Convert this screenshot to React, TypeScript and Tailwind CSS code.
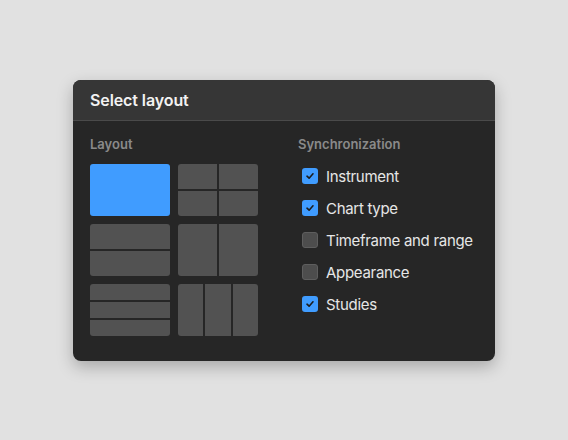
import React from "react";

function Check({ checked }: { checked: boolean }) {
  return checked ? (
    <div className="w-4 h-4 shrink-0 rounded-[3px] bg-[#409cff] flex items-center justify-center">
      <svg width="10" height="10" viewBox="0 0 10 10" fill="none">
        <path d="M2 5.2 L4.1 7.2 L8 2.8" stroke="#1c1c1c" strokeWidth="1.6" strokeLinecap="round" strokeLinejoin="round" />
      </svg>
    </div>
  ) : (
    <div className="w-4 h-4 shrink-0 rounded-[3px] bg-[#4d4d4d] border border-[#5e5e5e]" />
  );
}

const cell = "bg-[#525252]";

export default function App() {
  const items: [string, boolean][] = [
    ["Instrument", true],
    ["Chart type", true],
    ["Timeframe and range", false],
    ["Appearance", false],
    ["Studies", true],
  ];
  return (
    <div
      className="w-[568px] h-[440px] bg-[#e1e1e1] flex items-center justify-center"
      style={{ fontFamily: "Inter, 'Noto Sans', sans-serif" }}
    >
      <div className="w-[422px] h-[281px] rounded-[8px] bg-[#262626] overflow-hidden shadow-[0_6px_16px_rgba(0,0,0,0.25)] flex flex-col">
        <div className="h-[41px] shrink-0 bg-[#363636] border-b border-[#4a4a4a] flex items-center px-[17px]">
          <span className="text-[16px] font-semibold text-[#f2f2f2] tracking-[-0.1px]">Select layout</span>
        </div>
        <div className="flex px-[17px] pt-[15px] gap-[40px]">
          <div className="w-[168px] shrink-0">
            <div className="text-[13px] leading-4 font-semibold text-[#8a8a8a]">Layout</div>
            <div className="mt-[12px] grid grid-cols-2 gap-[8px]">
              <div className="h-[52px] rounded-[3px] bg-[#409cff]" />
              <div className="h-[52px] rounded-[3px] overflow-hidden grid grid-cols-2 grid-rows-2 gap-[2px]">
                <div className={cell} />
                <div className={cell} />
                <div className={cell} />
                <div className={cell} />
              </div>
              <div className="h-[52px] rounded-[3px] overflow-hidden grid grid-rows-2 gap-[2px]">
                <div className={cell} />
                <div className={cell} />
              </div>
              <div className="h-[52px] rounded-[3px] overflow-hidden grid grid-cols-2 gap-[2px]">
                <div className={cell} />
                <div className={cell} />
              </div>
              <div className="h-[52px] rounded-[3px] overflow-hidden grid grid-rows-3 gap-[2px]">
                <div className={cell} />
                <div className={cell} />
                <div className={cell} />
              </div>
              <div className="h-[52px] rounded-[3px] overflow-hidden grid grid-cols-3 gap-[2px]">
                <div className={cell} />
                <div className={cell} />
                <div className={cell} />
              </div>
            </div>
          </div>
          <div className="flex-1 min-w-0">
            <div className="text-[13px] leading-4 font-semibold text-[#8a8a8a]">Synchronization</div>
            <div className="mt-[8px] flex flex-col">
              {items.map(([label, on]) => (
                <div key={label} className="h-[32px] flex items-center gap-[8px] pl-[4px]">
                  <Check checked={on} />
                  <span className="text-[15px] leading-5 whitespace-nowrap tracking-[-0.3px] text-[#e6e6e6] pt-[2px]">{label}</span>
                </div>
              ))}
            </div>
          </div>
        </div>
      </div>
    </div>
  );
}
